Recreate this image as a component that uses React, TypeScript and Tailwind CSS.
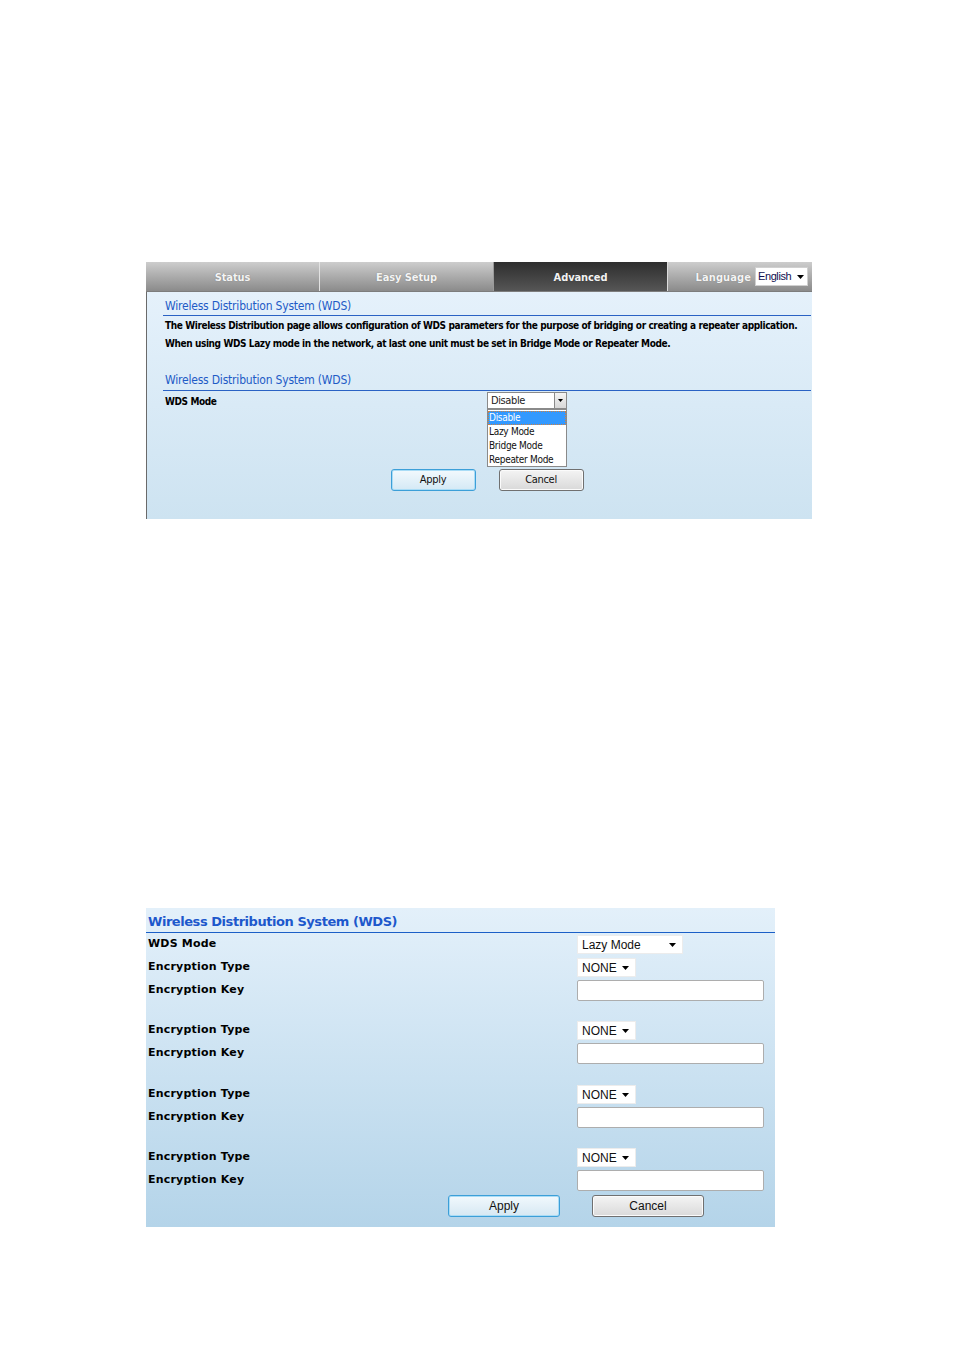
import React from "react";

const tahoma = { fontFamily: '"DejaVu Sans Condensed", "Liberation Sans Narrow", "Liberation Sans", sans-serif' };
const verdana = { fontFamily: '"DejaVu Sans", "Liberation Sans", sans-serif' };
const arial = { fontFamily: '"Liberation Sans", Arial, sans-serif' };

function Arrow({ className = "" }: { className?: string }) {
  return (
    <svg width="7" height="4" viewBox="0 0 7 4" className={className}>
      <path d="M0 0h7L3.5 4z" fill="#000" />
    </svg>
  );
}

function Tab({ label, active = false, w }: { label: string; active?: boolean; w: string }) {
  return (
    <div
      className={`${w} h-full flex items-center justify-center text-[11px] font-bold tracking-[-0.1px] ${
        active
          ? "bg-gradient-to-b from-[#2e2e2e] to-[#565656] text-[#f2f2f2]"
          : "bg-gradient-to-b from-[#cdcdcd] to-[#8b8b8b] text-[#f4f4f4]"
      }`}
      style={{ ...tahoma, textShadow: "0 0 1px rgba(0,0,0,0.35)" }}
    >
      <span className="pt-[3px]">{label}</span>
    </div>
  );
}

function TopPanel() {
  return (
    <div className="w-[666px]">
      <div className="h-[30px] flex border-b border-[#7d7d7d]">
        <Tab label="Status" w="w-[173px]" />
        <div className="w-px h-full bg-[#e2e2e2]" />
        <Tab label="Easy Setup" w="w-[173px]" />
        <div className="w-px h-full bg-[#9a9a9a]" />
        <Tab label="Advanced" active w="w-[173px]" />
        <div className="w-px h-full bg-[#dcdcdc]" />
        <div
          className="flex-1 h-full bg-gradient-to-b from-[#cdcdcd] to-[#8b8b8b] flex items-center justify-end pr-[4px] gap-[4px]"
          style={tahoma}
        >
          <span className="text-[11px] font-bold tracking-[0.1px] text-[#f4f4f4] pt-[3px]" style={{ textShadow: "0 0 1px rgba(0,0,0,0.35)" }}>
            Language
          </span>
          <div className="w-[53px] h-[19px] bg-white border border-[#d0d0d0] flex items-center justify-between pl-[2px] pr-[3px]">
            <span className="text-[11px] tracking-[-0.4px] text-[#101050] leading-none" style={arial}>English</span>
            <Arrow />
          </div>
        </div>
      </div>
      <div
        className="h-[227px] border-l border-[#6a6a6a] bg-gradient-to-b from-[#e5f1fb] to-[#cde3f1] pl-[16px] pr-[1px]"
        style={tahoma}
      >
        <div className="h-[24px] border-b border-[#2a62c4] flex items-end pl-[2px] pb-[3px]">
          <span className="text-[12px] tracking-[-0.2px] text-[#1e5bc6] leading-none">Wireless Distribution System (WDS)</span>
        </div>
        <div className="pl-[2px] pt-[1px] text-[10px] font-bold tracking-[-0.4px] text-black leading-[18px] whitespace-nowrap">
          <div>The Wireless Distribution page allows configuration of WDS parameters for the purpose of bridging or creating a repeater application.</div>
          <div>When using WDS Lazy mode in the network, at last one unit must be set in Bridge Mode or Repeater Mode.</div>
        </div>
        <div className="h-[38px] border-b border-[#2a62c4] flex items-end pl-[2px] pb-[4px]">
          <span className="text-[12px] tracking-[-0.2px] text-[#1e5bc6] leading-none">Wireless Distribution System (WDS)</span>
        </div>
        <div className="flex pt-[1px] h-[19px]">
          <div className="w-[324px] pl-[2px] pt-[3px] text-[10px] font-bold tracking-[-0.4px] text-black leading-[14px]">WDS Mode</div>
          <div className="relative">
            <div className="w-[80px] h-[17px] bg-white border border-[#8a8a8a] flex">
              <span className="flex-1 text-[11px] tracking-[-0.4px] text-[#222] pl-[3px] leading-[15px]">Disable</span>
              <div className="w-[12px] h-full border-l border-[#8a8a8a] bg-gradient-to-b from-[#f4f4f4] to-[#d8d8d8] flex items-center justify-center">
                <svg width="5" height="3" viewBox="0 0 5 3"><path d="M0 0h5L2.5 3z" fill="#000" /></svg>
              </div>
            </div>
            <div className="absolute left-0 top-[17px] w-[80px] h-[58px] bg-white border border-[#8a8a8a] z-10 text-[10px] tracking-[-0.3px] leading-[14px] text-[#111] pt-[1px]">
              <div className="h-[14px] bg-[#3399ff] text-white pl-[1px] outline outline-1 outline-dotted outline-[#d08040] -outline-offset-1">Disable</div>
              <div className="h-[14px] pl-[1px]">Lazy Mode</div>
              <div className="h-[14px] pl-[1px]">Bridge Mode</div>
              <div className="h-[14px] pl-[1px]">Repeater Mode</div>
            </div>
          </div>
        </div>
        <div className="flex justify-center gap-[23px] pt-[59px]">
          <button className="w-[85px] h-[22px] rounded-[3px] border border-[#3c9fd8] bg-gradient-to-b from-[#f2f9fd] to-[#d4e9f5] text-[11px] tracking-[-0.3px] text-[#111] shadow-[inset_0_0_0_1px_#a9dcf6]">
            Apply
          </button>
          <button className="w-[85px] h-[22px] rounded-[3px] border border-[#707070] bg-gradient-to-b from-[#f4f4f4] to-[#d9d9d9] text-[11px] tracking-[-0.3px] text-[#111] shadow-[inset_0_0_0_1px_#fbfbfb]">
            Cancel
          </button>
        </div>
      </div>
    </div>
  );
}

function Sel({ w, label }: { w: string; label: string }) {
  return (
    <div className={`${w} h-[19px] bg-white border border-[#ececec] flex items-center justify-between pl-[4px] pr-[6px]`} style={arial}>
      <span className="text-[12px] text-[#111] leading-none">{label}</span>
      <Arrow />
    </div>
  );
}

function Row({ label, children, h = "h-[23px]" }: { label: string; children?: React.ReactNode; h?: string }) {
  return (
    <div className={`flex items-center ${h}`}>
      <div className="w-[431px] pl-[2px] text-[11px] font-bold tracking-[0.2px] text-black" style={verdana}>{label}</div>
      <div>{children}</div>
    </div>
  );
}

function KeyInput() {
  return <div className="w-[187px] h-[21px] bg-white border border-[#adadad] rounded-[2px]" />;
}

function BottomPanel() {
  return (
    <div className="w-[629px] h-[319px] bg-gradient-to-b from-[#e3f0fa] to-[#b4d4e9]">
      <div className="h-[25px] border-b border-[#1b5fc7] flex items-end pl-[2px] pb-[4px]">
        <span className="text-[13px] font-bold tracking-[-0.45px] text-[#1d58cc] leading-none" style={verdana}>Wireless Distribution System (WDS)</span>
      </div>
      <div>
        <Row label="WDS Mode"><Sel w="w-[106px]" label="Lazy Mode" /></Row>
        <Row label="Encryption Type"><Sel w="w-[59px]" label="NONE" /></Row>
        <Row label="Encryption Key"><KeyInput /></Row>
        <div className="h-[17px]" />
        <Row label="Encryption Type"><Sel w="w-[59px]" label="NONE" /></Row>
        <Row label="Encryption Key"><KeyInput /></Row>
        <div className="h-[18px]" />
        <Row label="Encryption Type"><Sel w="w-[59px]" label="NONE" /></Row>
        <Row label="Encryption Key"><KeyInput /></Row>
        <div className="h-[17px]" />
        <Row label="Encryption Type"><Sel w="w-[59px]" label="NONE" /></Row>
        <Row label="Encryption Key"><KeyInput /></Row>
      </div>
      <div className="flex gap-[32px] pl-[302px] pt-[3px]" style={arial}>
        <button className="w-[112px] h-[22px] rounded-[3px] border border-[#3c9fd8] bg-gradient-to-b from-[#f2f9fd] to-[#d6e8f3] text-[12px] text-[#111] shadow-[inset_0_0_0_1px_#a9dcf6]">
          Apply
        </button>
        <button className="w-[112px] h-[22px] rounded-[3px] border border-[#707070] bg-gradient-to-b from-[#f4f4f4] to-[#dadada] text-[12px] text-[#111] shadow-[inset_0_0_0_1px_#fbfbfb]">
          Cancel
        </button>
      </div>
    </div>
  );
}

export default function App() {
  return (
    <div className="w-[955px] h-[1350px] bg-white pl-[146px]">
      <div className="pt-[262px]">
        <TopPanel />
      </div>
      <div className="pt-[389px]">
        <BottomPanel />
      </div>
    </div>
  );
}
